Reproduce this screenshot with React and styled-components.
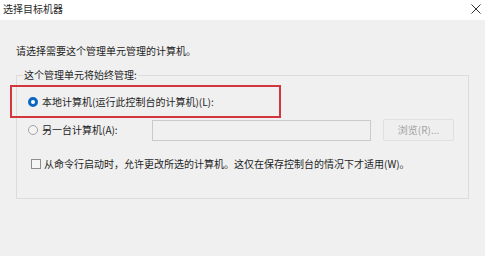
import React from "react";
import styled, { createGlobalStyle } from "styled-components";

const GlobalStyle = createGlobalStyle`
  html, body { margin: 0; padding: 0; }
  body {
    background: #f0f0f0;
    font-family: "Noto Sans CJK SC", "Noto Sans", "Liberation Sans", sans-serif;
    color: #1e1e1e;
    width: 485px;
    height: 256px;
    overflow: hidden;
  }
  * { box-sizing: border-box; }
`;

const Window = styled.div`
  width: 485px;
  height: 256px;
  display: flex;
  flex-direction: column;
  background: #f0f0f0;
`;

const TitleBar = styled.div`
  height: 20px;
  background: #ffffff;
  display: flex;
  align-items: center;
  justify-content: space-between;
  padding: 0 3px 0 3px;
`;

const Title = styled.span`
  font-size: 10px;
  line-height: 14px;
  color: #2a2a2a;
  margin-top: -3px;
`;

const CloseButton = styled.span`
  width: 12px;
  height: 12px;
  display: flex;
  align-items: center;
  justify-content: center;
  margin-top: -3px;
`;

const Content = styled.div`
  padding: 24px 16px 0 16px;
  display: flex;
  flex-direction: column;
`;

const Text = styled.div`
  font-size: 10px;
  line-height: 14px;
  white-space: nowrap;
  color: ${(p) => (p.$disabled ? "#a3a3a3" : "#1e1e1e")};
`;

const Intro = styled(Text)`
  margin-bottom: 10px;
`;

const GroupBox = styled.fieldset`
  margin: 0;
  border: 1px solid #dcdcdc;
  padding: 3px 0 27px 0;
  display: flex;
  flex-direction: column;
  min-width: 0;
`;

const GroupLegend = styled.legend`
  font-size: 10px;
  line-height: 14px;
  padding: 0 1px;
  margin-left: 6px;
  color: #1e1e1e;
`;

const HighlightRow = styled.div`
  width: 271px;
  height: 33px;
  margin-left: -7px;
  border: 2px solid #d3363d;
  display: flex;
  align-items: center;
  padding-left: 16px;
  gap: 4px;
`;

const Row = styled.div`
  display: flex;
  align-items: center;
  height: ${(p) => p.$height || 22}px;
  margin-left: ${(p) => p.$indent || 0}px;
  margin-top: ${(p) => p.$top || 0}px;
`;

const Radio = styled.span`
  width: 10px;
  height: 10px;
  border-radius: 50%;
  flex: none;
  background: ${(p) => (p.$checked ? "#ffffff" : "#f4f4f4")};
  border: ${(p) => (p.$checked ? "3px solid #0b66c2" : "1px solid #a3a3a3")};
`;

const OptionLabel = styled(Text)`
  margin-left: ${(p) => p.$gap || 4}px;
  width: ${(p) => (p.$width ? `${p.$width}px` : "auto")};
`;

const Input = styled.div`
  width: 219px;
  height: 21px;
  border: 1px solid #cacaca;
  background: #f0f0f0;
`;

const Button = styled.div`
  width: 71px;
  height: 22px;
  margin-left: 12px;
  border: 1px solid #e0e0e0;
  background: #efefef;
  border-radius: 2px;
  display: flex;
  align-items: center;
  justify-content: center;
`;

const Checkbox = styled.span`
  width: 10px;
  height: 10px;
  flex: none;
  border: 1px solid #8e8e8e;
  background: #f6f6f6;
`;

export default function App() {
  return (
    <>
      <GlobalStyle />
      <Window>
        <TitleBar>
          <Title>选择目标机器</Title>
          <CloseButton>
            <svg width="10" height="10" viewBox="0 0 10 10">
              <path d="M0.5 0.5 L9.5 9.5 M9.5 0.5 L0.5 9.5" stroke="#333" strokeWidth="1" fill="none" />
            </svg>
          </CloseButton>
        </TitleBar>
        <Content>
          <Intro>请选择需要这个管理单元管理的计算机。</Intro>
          <GroupBox>
            <GroupLegend>这个管理单元将始终管理:</GroupLegend>
            <HighlightRow>
              <Radio $checked />
              <Text>本地计算机(运行此控制台的计算机)(L):</Text>
            </HighlightRow>
            <Row $indent={11} $top={1}>
              <Radio />
              <OptionLabel $width={110}>另一台计算机(A):</OptionLabel>
              <Input />
              <Button>
                <Text $disabled>浏览(R)...</Text>
              </Button>
            </Row>
            <Row $indent={14} $height={14} $top={16}>
              <Checkbox />
              <OptionLabel $gap={3}>从命令行启动时，允许更改所选的计算机。这仅在保存控制台的情况下才适用(W)。</OptionLabel>
            </Row>
          </GroupBox>
        </Content>
      </Window>
    </>
  );
}
